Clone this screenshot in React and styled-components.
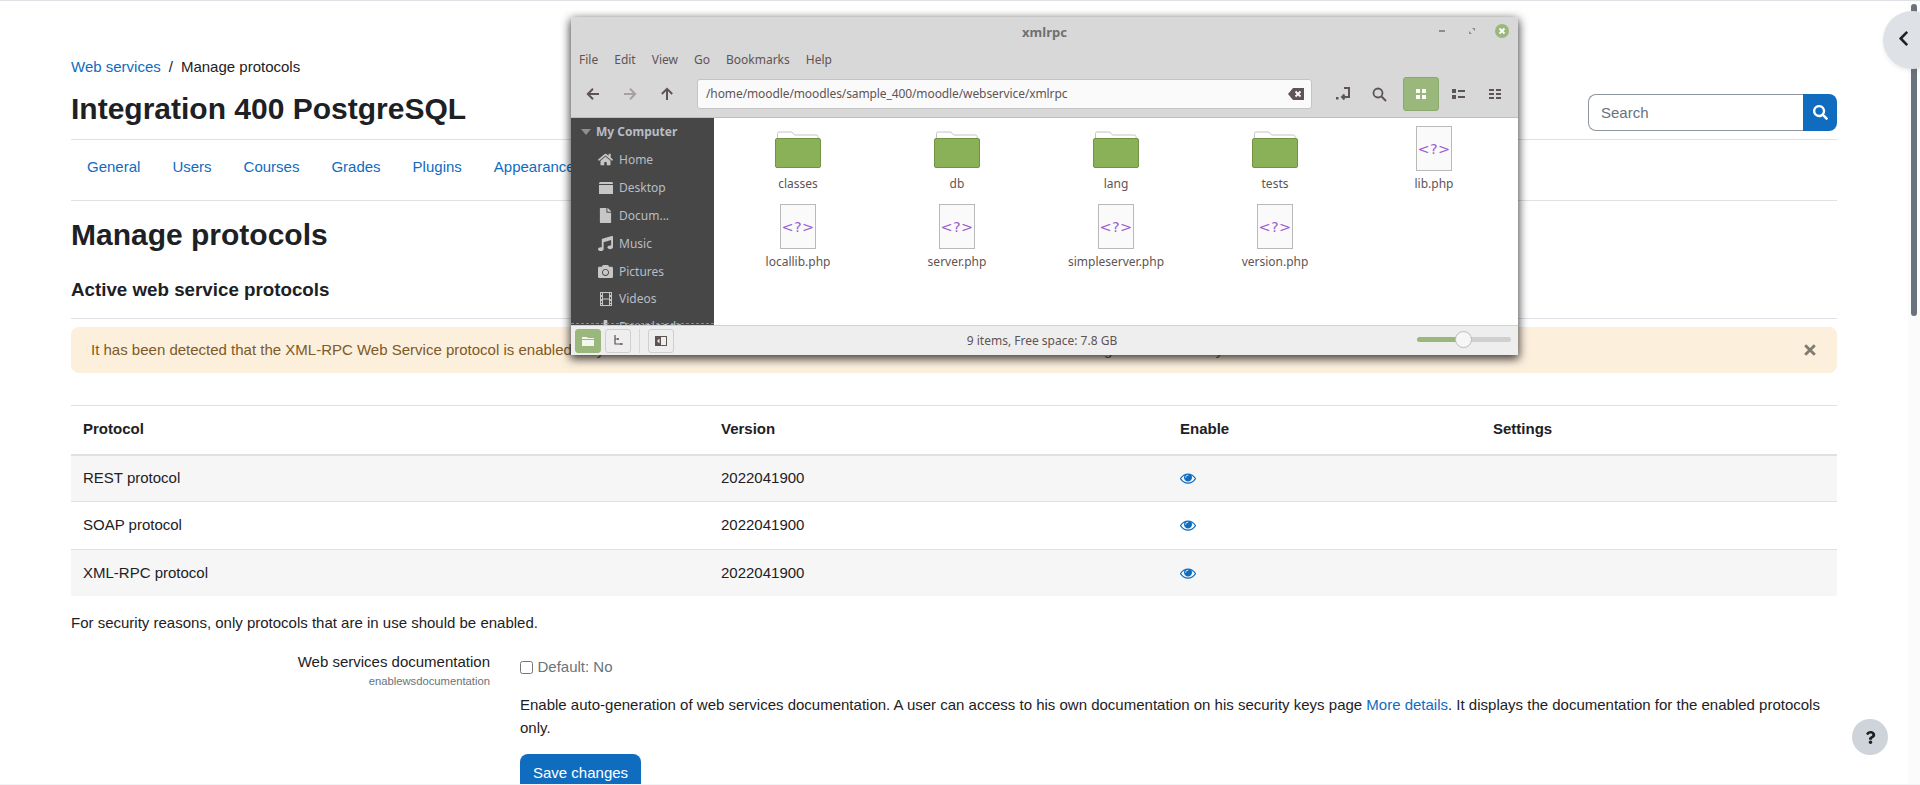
import React from "react";
import styled, { createGlobalStyle } from "styled-components";
import { FaSearch, FaChevronLeft, FaQuestion, FaHome, FaFile, FaMusic, FaCamera, FaDownload } from "react-icons/fa";

const Global = createGlobalStyle`
  html, body {
    margin: 0;
    height: 100%;
    overflow: hidden;
    background: #fff;
  }
  * {
    box-sizing: border-box;
  }
  a {
    color: #0f6cbf;
    text-decoration: none;
  }
`;

const protocols = ["REST protocol", "SOAP protocol", "XML-RPC protocol"];
const tabs = ["General", "Users", "Courses", "Grades", "Plugins", "Appearance", "Server", "Reports", "Development"];
const places = [
  { name: "Home", icon: <FaHome /> },
  { name: "Desktop", icon: <DesktopIcon /> },
  { name: "Docum...", icon: <FaFile /> },
  { name: "Music", icon: <FaMusic /> },
  { name: "Pictures", icon: <FaCamera /> },
  { name: "Videos", icon: <FilmIcon /> },
  { name: "Downloads", icon: <FaDownload /> },
];
const files = [
  { name: "classes", folder: true },
  { name: "db", folder: true },
  { name: "lang", folder: true },
  { name: "tests", folder: true },
  { name: "lib.php" },
  { name: "locallib.php" },
  { name: "server.php" },
  { name: "simpleserver.php" },
  { name: "version.php" },
];

function DesktopIcon() {
  return (
    <svg viewBox="0 0 14 12" width="14" height="12">
      <path d="M0 1.5C0 .7.7 0 1.5 0h11c.8 0 1.5.7 1.5 1.5V12H0z" fill="currentColor" />
      <rect x="0" y="2" width="14" height="1" fill="#474747" />
    </svg>
  );
}

function FilmIcon() {
  return (
    <svg viewBox="0 0 12 14" width="12" height="14">
      <path
        d="M0 0h12v14H0zM1 1v2h1V1zM10 1v2h1V1zM1 5v2h1V5zM10 5v2h1V5zM1 9v2h1V9zM10 9v2h1V9zM1 12v1h1v-1zM10 12v1h1v-1zM3 1v5.500h6V1zM3 7.500V13h6V7.500z"
        fill="currentColor"
        fillRule="evenodd"
      />
    </svg>
  );
}

// font awesome 4 eye, moodle still ships this one
function EyeIcon() {
  return (
    <svg viewBox="0 0 1792 1792" width="16" height="16" fill="currentColor">
      <path d="M1664 960q-152-236-381-353 61 104 61 225 0 185-131.500 316.500t-316.500 131.500-316.500-131.500-131.500-316.500q0-121 61-225-229 117-381 353 133 205 333.500 326.500t434.500 121.500 434.500-121.500 333.500-326.500zm-720-384q0-20-14-34t-34-14q-125 0-214.500 89.500t-89.500 214.500q0 20 14 34t34 14 34-14 14-34q0-86 61-147t147-61q20 0 34-14t14-34zm848 384q0 34-20 69-140 230-376.500 368.500t-499.500 138.500-499.500-139-376.500-368q-20-35-20-69t20-69q140-229 376.500-368t499.500-139 499.500 139 376.500 368q20 35 20 69z" />
    </svg>
  );
}

function FolderIcon() {
  return (
    <svg viewBox="0 0 46 37" width="46" height="37">
      <path d="M2.500 8V2.500q0-1.500 1.500-1.500h12q1 0 2 1.200l1.500 1.800H41.500q1.500 0 1.500 1.500V8" fill="#fff" stroke="#c4c4c8" />
      <rect x=".5" y="7.500" width="45" height="29" rx="1.500" fill="#8bb158" stroke="#729442" />
    </svg>
  );
}

function Arrow({ dir, color }) {
  const turn = { left: 0, right: 180, up: 90 }[dir];
  return (
    <svg viewBox="0 0 14 14" width="14" height="14" style={{ transform: `rotate(${turn}deg)` }}>
      <path d="M13 7H2M7 1.800 1.800 7 7 12.200" fill="none" stroke={color} strokeWidth="2" />
    </svg>
  );
}

const Page = styled.div`
  position: relative;
  height: 100vh;
  overflow: hidden;
  padding: 55px 83px 0 71px;
  border-top: 1px solid #dee2e6;
  border-bottom: 1px solid #f2f3f4;
  font-family: "Liberation Sans", Arial, sans-serif;
  font-size: 15px;
  line-height: 22.5px;
  color: #1d2125;
`;

const Crumbs = styled.div`
  display: flex;
  gap: 8px;
`;

const HeaderRow = styled.div`
  display: flex;
  justify-content: space-between;
  align-items: flex-end;
  height: 61px;
  padding-bottom: 8px;
  border-bottom: 1px solid #dee2e6;
`;

const SiteTitle = styled.h1`
  margin: 0 0 4px;
  font-size: 30px;
  line-height: 36px;
  font-weight: 700;
`;

const SearchBox = styled.div`
  display: flex;
  width: 249px;
  height: 37px;
`;

const SearchField = styled.div`
  flex: 1;
  padding: 7px 12px 5px;
  color: #6a737b;
  border: 1px solid #8f959e;
  border-right: 0;
  border-radius: 8px 0 0 8px;
`;

const SearchButton = styled.div`
  display: flex;
  align-items: center;
  justify-content: center;
  width: 34px;
  color: #fff;
  font-size: 15px;
  background: #0f6cbf;
  border-radius: 0 8px 8px 0;
`;

const Tabs = styled.nav`
  display: flex;
  align-items: center;
  height: 61px;
  padding-bottom: 5px;
  border-bottom: 1px solid #dee2e6;
`;

const Tab = styled.a`
  padding: 0 16px;
`;

const PageHeading = styled.h2`
  margin: 16px 0 0;
  font-size: 30px;
  line-height: 36px;
  font-weight: 700;
`;

const SectionHeading = styled.h3`
  margin: 26px 0 0;
  padding-bottom: 17px;
  font-size: 18.75px;
  line-height: 22.5px;
  font-weight: 700;
  border-bottom: 1px solid #dee2e6;
`;

const Alert = styled.div`
  display: flex;
  align-items: center;
  justify-content: space-between;
  height: 46px;
  margin: 8px 0 32px;
  padding: 0 21px 0 20px;
  color: #7d5a29;
  background: #fcefdc;
  border-radius: 8px;
`;

const CloseMark = styled.svg`
  width: 12px;
  height: 12px;
`;

const Table = styled.table`
  width: 100%;
  table-layout: fixed;
  border-collapse: collapse;
`;

const HeadCell = styled.th`
  height: 49px;
  padding: 0 12px 2px;
  text-align: left;
  font-weight: 700;
  border-top: 1px solid #dee2e6;
  border-bottom: 2px solid #dee2e6;
`;

const Row = styled.tr`
  background: ${(p) => (p.$odd ? "#f6f6f7" : "#fff")};
`;

const Cell = styled.td`
  height: 47.3px;
  padding: 0 12px;
  border-top: 1px solid #dee2e6;
  tr:first-child > & {
    border-top: 0;
  }
`;

const EyeLink = styled.a`
  display: inline-flex;
  margin-top: -2px;
  vertical-align: middle;
`;

const Note = styled.p`
  margin: 16px 0;
`;

const Setting = styled.div`
  display: grid;
  grid-template-columns: 419px 1fr;
  column-gap: 30px;
`;

const SettingName = styled.div`
  text-align: right;
`;

const SettingKey = styled.div`
  font-size: 11.25px;
  line-height: 17px;
  color: #6a737b;
`;

const DefaultRow = styled.label`
  display: flex;
  align-items: center;
  gap: 4.5px;
  margin-top: 5px;
  color: #6a737b;
`;

const Check = styled.input`
  width: 13px;
  height: 13px;
  margin: 0;
`;

const Description = styled.p`
  margin: 15px 0 15px;
  line-height: 23px;
`;

const SaveButton = styled.button`
  height: 38px;
  padding: 0 13px;
  font: inherit;
  color: #fff;
  background: #0f6cbf;
  border: 0;
  border-radius: 8px;
`;

const ScrollTrack = styled.div`
  position: absolute;
  top: 0;
  right: 0;
  bottom: 0;
  width: 12px;
  background: #fbfbfc;
`;

const ScrollThumb = styled.div`
  margin: 3px 3px 0;
  width: 6px;
  height: 312px;
  background: #6a737b;
  border-radius: 3px;
`;

const DrawerToggle = styled.div`
  position: absolute;
  top: 10px;
  left: 1883px;
  display: flex;
  align-items: center;
  width: 58px;
  height: 58px;
  padding: 0 0 3px 12px;
  font-size: 17px;
  color: #1d2125;
  background: #dee2e6;
  border-radius: 50%;
  box-shadow: 0 2px 4px rgba(0, 0, 0, 0.075);
`;

const HelpButton = styled.div`
  position: absolute;
  top: 718px;
  left: 1852px;
  display: flex;
  align-items: center;
  justify-content: center;
  width: 36px;
  height: 36px;
  font-size: 13px;
  color: #1d2125;
  background: #ced4da;
  border-radius: 50%;
`;

/* file manager window on top of the page */
const Window = styled.div`
  position: absolute;
  top: 16px;
  left: 571px;
  display: flex;
  flex-direction: column;
  width: 947px;
  height: 338px;
  overflow: hidden;
  font-family: "Noto Sans", sans-serif;
  font-size: 12px;
  line-height: 16px;
  color: #5f5454;
  background: #d8d8d8;
  border-radius: 3px 3px 0 0;
`;

const WindowShadow = styled.div`
  position: absolute;
  top: 16px;
  left: 571px;
  width: 947px;
  height: 338px;
  border-radius: 3px 3px 0 0;
  box-shadow: 0 3px 10px 1px rgba(0, 0, 0, 0.75);
`;

const TitleBar = styled.div`
  position: relative;
  display: flex;
  align-items: center;
  justify-content: center;
  height: 30px;
  flex: none;
  font-size: 13px;
  font-weight: 700;
  color: #707070;
`;

const WindowControls = styled.div`
  position: absolute;
  top: 7px;
  right: 9px;
  display: flex;
  align-items: center;
  gap: 16px;
`;

const ControlButton = styled.span`
  display: flex;
  align-items: center;
  justify-content: center;
  width: 14px;
  height: 14px;
  border-radius: 50%;
  background: ${(p) => (p.$close ? "#9ab87c" : "transparent")};
`;

const MenuBar = styled.div`
  display: flex;
  flex: none;
  gap: 16px;
  height: 26px;
  align-items: center;
  padding-left: 8px;
`;

const Toolbar = styled.div`
  display: flex;
  flex: none;
  align-items: center;
  height: 45px;
  padding: 0 0 2px 15px;
  border-bottom: 1px solid #bdbdbd;
`;

const NavButton = styled.span`
  display: flex;
  justify-content: center;
  width: 14px;
  margin-right: 23px;
`;

const PathEntry = styled.div`
  display: flex;
  align-items: center;
  justify-content: space-between;
  width: 615px;
  height: 30px;
  padding: 0 7px 0 8px;
  letter-spacing: -0.1px;
  background: #fafafa;
  border: 1px solid #c4c4c4;
  border-radius: 3px;
`;

const ToolGroup = styled.div`
  display: flex;
  align-items: center;
  margin-left: 12px;
`;

const ToolButton = styled.span`
  display: flex;
  align-items: center;
  justify-content: center;
  width: ${(p) => (p.$active ? "36px" : "37px")};
  height: 34px;
  margin-left: ${(p) => (p.$active ? "5px" : "0")};
  background: ${(p) => (p.$active ? "#9ab87c" : "transparent")};
  border: ${(p) => (p.$active ? "1px solid #8aa86e" : "0")};
  border-radius: 3px;
`;

const Body = styled.div`
  display: flex;
  flex: 1;
  min-height: 0;
`;

const Sidebar = styled.div`
  position: relative;
  width: 143px;
  flex: none;
  overflow: hidden;
  padding: 4px 0 0 10px;
  color: #b6bec5;
  background: #474747;
`;

const SideHeading = styled.div`
  display: flex;
  align-items: center;
  gap: 5px;
  height: 20px;
  margin-bottom: 4px;
  font-weight: 700;
`;

const SideCaret = styled.span`
  width: 0;
  height: 0;
  border-left: 5px solid transparent;
  border-right: 5px solid transparent;
  border-top: 6px solid #8f8f8f;
`;

const SideItem = styled.div`
  display: flex;
  align-items: center;
  height: 27.9px;
  padding-left: 17px;
`;

const SideIcon = styled.span`
  display: flex;
  justify-content: center;
  width: 15px;
  margin-right: 6px;
  font-size: 15px;
  color: #c6c6c6;
`;

const SideRule = styled.div`
  position: absolute;
  left: 0;
  right: 0;
  bottom: 1px;
  border-bottom: 1px dashed #8a8a8a;
`;

const FileGrid = styled.div`
  display: grid;
  flex: 1;
  grid-template-columns: repeat(5, 159px);
  grid-auto-rows: 78px;
  align-content: start;
  padding: 7px 0 0 4.5px;
  background: #fff;
`;

const FileCell = styled.div`
  display: flex;
  flex-direction: column;
  align-items: center;
`;

const FileIconBox = styled.div`
  display: flex;
  align-items: flex-start;
  justify-content: center;
  height: 46px;
  margin-bottom: 5px;
  padding-top: ${(p) => (p.$folder ? "6px" : "1px")};
`;

const PhpFile = styled.div`
  display: flex;
  align-items: center;
  justify-content: center;
  width: 36px;
  height: 45px;
  font-family: "DejaVu Sans", sans-serif;
  font-size: 14.5px;
  letter-spacing: 0.3px;
  color: #9b5fd0;
  background: #fafafa;
  border: 1px solid #b9b9b9;
`;

const StatusBar = styled.div`
  position: relative;
  display: flex;
  flex: none;
  align-items: center;
  height: 30px;
  padding-left: 4px;
  background: #eeeeee;
  border-top: 1px solid #d2d2d2;
`;

const StatusButton = styled.span`
  display: flex;
  align-items: center;
  justify-content: center;
  width: 26px;
  height: 24px;
  margin-right: 4px;
  background: ${(p) => (p.$active ? "#9ab87c" : "transparent")};
  border: 1px solid ${(p) => (p.$active ? "#9ab87c" : "#cfcfcf")};
  border-radius: 3px;
`;

const StatusSep = styled.span`
  width: 1px;
  height: 24px;
  margin: 0 8px 0 4px;
  background: #d6d6d6;
`;

const StatusText = styled.span`
  flex: 1;
  margin-right: 112px;
  text-align: center;
`;

const Slider = styled.div`
  position: absolute;
  top: 11px;
  right: 7px;
  width: 94px;
  height: 5px;
  background: linear-gradient(90deg, #9ab87c 42%, #cfcfcf 42%);
  border-radius: 3px;
`;

const SliderKnob = styled.span`
  position: absolute;
  top: -6px;
  left: 38px;
  width: 17px;
  height: 17px;
  background: #f6f6f6;
  border: 1px solid #bcbcbc;
  border-radius: 50%;
`;

export default function App() {
  return (
    <>
      <Global />
      <Page>
        <Crumbs>
          <a href="#">Web services</a>
          <span>/</span>
          <span>Manage protocols</span>
        </Crumbs>
        <HeaderRow>
          <SiteTitle>Integration 400 PostgreSQL</SiteTitle>
          <SearchBox>
            <SearchField>Search</SearchField>
            <SearchButton>
              <FaSearch />
            </SearchButton>
          </SearchBox>
        </HeaderRow>
        <Tabs>
          {tabs.map((t) => (
            <Tab href="#" key={t}>
              {t}
            </Tab>
          ))}
        </Tabs>
        <PageHeading>Manage protocols</PageHeading>
        <SectionHeading>Active web service protocols</SectionHeading>
        <Alert>
          <span>
            It has been detected that the XML-RPC Web Service protocol is enabled on your site. This feature relies on
            the PHP XML-RPC extension which is no longer maintained by PHP.
          </span>
          <CloseMark viewBox="0 0 12 12">
            <path d="M1.200 1.200l9.600 9.600M10.800 1.200l-9.600 9.600" stroke="#7f7a72" strokeWidth="2.800" />
          </CloseMark>
        </Alert>
        <Table>
          <colgroup>
            <col style={{ width: 638 }} />
            <col style={{ width: 459 }} />
            <col style={{ width: 313 }} />
            <col />
          </colgroup>
          <thead>
            <tr>
              <HeadCell>Protocol</HeadCell>
              <HeadCell>Version</HeadCell>
              <HeadCell>Enable</HeadCell>
              <HeadCell>Settings</HeadCell>
            </tr>
          </thead>
          <tbody>
            {protocols.map((name, i) => (
              <Row key={name} $odd={i % 2 === 0}>
                <Cell>{name}</Cell>
                <Cell>2022041900</Cell>
                <Cell>
                  <EyeLink href="#">
                    <EyeIcon />
                  </EyeLink>
                </Cell>
                <Cell />
              </Row>
            ))}
          </tbody>
        </Table>
        <Note>For security reasons, only protocols that are in use should be enabled.</Note>
        <Setting>
          <SettingName>
            Web services documentation
            <SettingKey>enablewsdocumentation</SettingKey>
          </SettingName>
          <div>
            <DefaultRow>
              <Check type="checkbox" />
              Default: No
            </DefaultRow>
            <Description>
              Enable auto-generation of web services documentation. A user can access to his own documentation on his
              security keys page <a href="#">More details</a>. It displays the documentation for the enabled protocols
              only.
            </Description>
            <SaveButton>Save changes</SaveButton>
          </div>
        </Setting>

        <ScrollTrack>
          <ScrollThumb />
        </ScrollTrack>
        <DrawerToggle>
          <FaChevronLeft />
        </DrawerToggle>
        <HelpButton>
          <FaQuestion />
        </HelpButton>

        <WindowShadow />
        <Window>
          <TitleBar>
            xmlrpc
            <WindowControls>
              <ControlButton>
                <svg viewBox="0 0 8 8" width="8" height="8">
                  <rect x="1" y="3" width="6" height="2" fill="#8c8c8c" />
                </svg>
              </ControlButton>
              <ControlButton>
                <svg viewBox="0 0 8 8" width="8" height="8">
                  <path d="M4 1h3v3zM1 4v3h3z" fill="#8c8c8c" />
                </svg>
              </ControlButton>
              <ControlButton $close>
                <svg viewBox="0 0 8 8" width="8" height="8">
                  <path d="M1.500 1.500l5 5M6.500 1.500l-5 5" stroke="#fff" strokeWidth="1.800" />
                </svg>
              </ControlButton>
            </WindowControls>
          </TitleBar>
          <MenuBar>
            <span>File</span>
            <span>Edit</span>
            <span>View</span>
            <span>Go</span>
            <span>Bookmarks</span>
            <span>Help</span>
          </MenuBar>
          <Toolbar>
            <NavButton>
              <Arrow dir="left" color="#5f5454" />
            </NavButton>
            <NavButton>
              <Arrow dir="right" color="#a89f9f" />
            </NavButton>
            <NavButton>
              <Arrow dir="up" color="#5f5454" />
            </NavButton>
            <PathEntry>
              /home/moodle/moodles/sample_400/moodle/webservice/xmlrpc
              <svg viewBox="0 0 16 12" width="16" height="12">
                <path d="M5 0h11v12H5L0 6z" fill="#5f5454" />
                <path d="M7.500 3.500l5 5M12.500 3.500l-5 5" stroke="#fafafa" strokeWidth="1.800" />
              </svg>
            </PathEntry>
            <ToolGroup>
              <ToolButton>
                <svg viewBox="0 0 16 14" width="16" height="14">
                  <path d="M9 1h5v9H7M9.500 7.500 7 10l2.500 2.500" fill="none" stroke="#5f5454" strokeWidth="2" />
                  <rect x="1" y="10" width="2.500" height="2.500" fill="#5f5454" />
                </svg>
              </ToolButton>
              <ToolButton>
                <svg viewBox="0 0 15 15" width="15" height="15">
                  <circle cx="6" cy="6" r="4.500" fill="none" stroke="#5f5454" strokeWidth="1.800" />
                  <path d="M9.500 9.500 14 14" stroke="#5f5454" strokeWidth="2" />
                </svg>
              </ToolButton>
              <ToolButton $active>
                <svg viewBox="0 0 12 12" width="12" height="12">
                  <path d="M1 1h4v4H1zM7 1h4v4H7zM1 7h4v4H1zM7 7h4v4H7z" fill="#fff" />
                </svg>
              </ToolButton>
              <ToolButton>
                <svg viewBox="0 0 14 12" width="14" height="12">
                  <path d="M1 1h4v4H1zM1 7h4v4H1zM7 2h7v2H7zM7 8h7v2H7z" fill="#5f5454" />
                </svg>
              </ToolButton>
              <ToolButton>
                <svg viewBox="0 0 14 12" width="14" height="12">
                  <path d="M1 1h5v2H1zM1 5h5v2H1zM1 9h5v2H1zM8 1h5v2H8zM8 5h5v2H8zM8 9h5v2H8z" fill="#5f5454" />
                </svg>
              </ToolButton>
            </ToolGroup>
          </Toolbar>
          <Body>
            <Sidebar>
              <SideHeading>
                <SideCaret />
                My Computer
              </SideHeading>
              {places.map((p) => (
                <SideItem key={p.name}>
                  <SideIcon>{p.icon}</SideIcon>
                  {p.name}
                </SideItem>
              ))}
              <SideRule />
            </Sidebar>
            <FileGrid>
              {files.map((f) => (
                <FileCell key={f.name}>
                  <FileIconBox $folder={f.folder}>{f.folder ? <FolderIcon /> : <PhpFile>&lt;?&gt;</PhpFile>}</FileIconBox>
                  {f.name}
                </FileCell>
              ))}
            </FileGrid>
          </Body>
          <StatusBar>
            <StatusButton $active>
              <svg viewBox="0 0 14 12" width="14" height="12">
                <path d="M1 2h5l1 1h6v1H1zM1 5h12v6H1z" fill="#f3f7ee" />
              </svg>
            </StatusButton>
            <StatusButton>
              <svg viewBox="0 0 11 11" width="11" height="11">
                <path d="M2 0v9h8M2 4h4M5 3v2M8 8v2" fill="none" stroke="#5f5454" strokeWidth="1.200" />
              </svg>
            </StatusButton>
            <StatusSep />
            <StatusButton>
              <svg viewBox="0 0 12 10" width="12" height="10">
                <rect x=".5" y=".5" width="11" height="9" fill="none" stroke="#5f5454" />
                <path d="M1 1h5v8H1z" fill="#5f5454" />
                <path d="M4.500 2.500v5L2 5z" fill="#eee" />
              </svg>
            </StatusButton>
            <StatusText>9 items, Free space: 7.8 GB</StatusText>
            <Slider>
              <SliderKnob />
            </Slider>
          </StatusBar>
        </Window>
      </Page>
    </>
  );
}
